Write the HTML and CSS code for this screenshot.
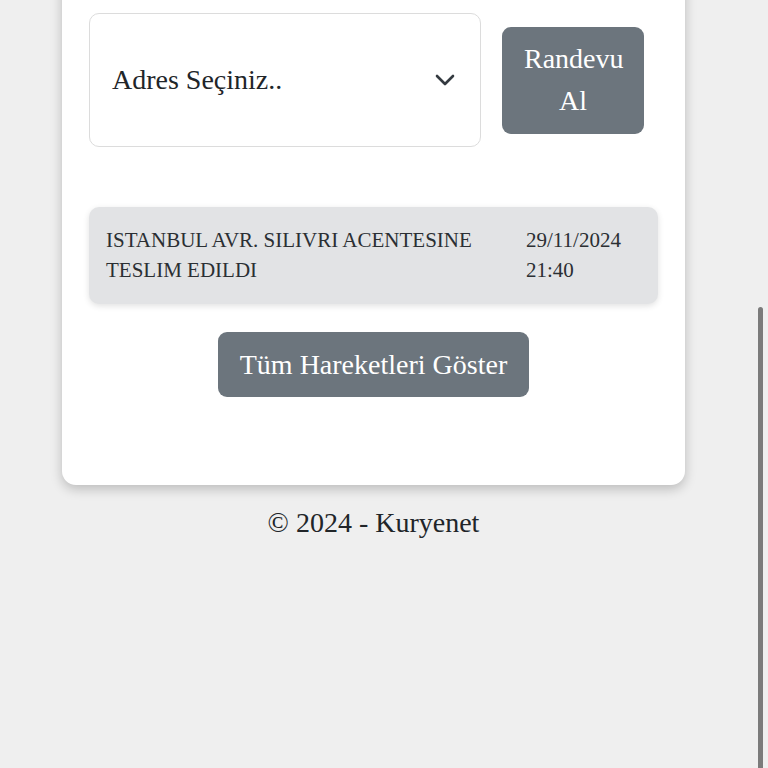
FILE: index.html
```html
<!DOCTYPE html>
<html lang="tr">
<head>
<meta charset="utf-8">
<title>Kuryenet</title>
<link rel="stylesheet" href="styles.css">
</head>
<body>
<div class="page">
  <div class="card">
    <div class="form-row">
      <div class="select">
        <span class="select-text">Adres Seçiniz..</span>
        <svg class="chevron" width="20" height="12" viewBox="0 0 20 12"><path d="M2 2 L10 10 L18 2" fill="none" stroke="#343a40" stroke-width="2.6" stroke-linecap="round" stroke-linejoin="round"/></svg>
      </div>
      <button class="btn btn-randevu">Randevu<br>Al</button>
    </div>
    <div class="move-row">
      <div class="move-desc">ISTANBUL AVR. SILIVRI ACENTESINE TESLIM EDILDI</div>
      <div class="move-date">29/11/2024<br>21:40</div>
    </div>
    <div class="actions">
      <button class="btn btn-all">Tüm Hareketleri Göster</button>
    </div>
  </div>
  <footer class="footer">© 2024 - Kuryenet</footer>
</div>
<div class="scrollbar"></div>
</body>
</html>
```

FILE: styles.css
```css
html, body {
  margin: 0;
  padding: 0;
  background: #efefef;
  font-family: "Liberation Serif", "Times New Roman", serif;
  color: #212529;
  overflow: hidden;
  height: 768px;
}

.page {
  width: 623px;
  padding: 0 62px;
}

.card {
  background: #fff;
  border-radius: 14px;
  margin-top: -30px;
  padding: 43px 27px 88px 27px;
  box-shadow: 0 4px 12px rgba(0, 0, 0, 0.22);
}

.form-row {
  display: grid;
  grid-template-columns: 392px 142px;
  column-gap: 21px;
  align-items: center;
}

.select {
  box-sizing: border-box;
  height: 134px;
  border: 1.5px solid #dcdcdc;
  border-radius: 10px;
  display: flex;
  align-items: center;
  justify-content: space-between;
  padding: 0 25px 0 22px;
  font-size: 28px;
  color: #212529;
}

.chevron {
  display: block;
}

.btn {
  font-family: "Liberation Serif", "Times New Roman", serif;
  font-size: 28px;
  line-height: 42px;
  color: #fff;
  background: #6c757d;
  border: none;
  border-radius: 9px;
  padding: 11.5px 22px;
  cursor: pointer;
}

.btn-randevu {
  width: 142px;
}

.move-row {
  margin-top: 60px;
  display: grid;
  grid-template-columns: 1fr 132px;
  background: #e2e3e5;
  border-radius: 10px;
  padding: 18px 0 19px 17px;
  font-size: 21px;
  line-height: 30px;
  color: #2b2f33;
  box-shadow: 0 2px 6px rgba(0, 0, 0, 0.12);
}

.move-desc {
  padding-right: 40px;
}

.actions {
  margin-top: 28px;
  display: flex;
  justify-content: center;
}

.btn-all {
  padding: 11.5px 21.5px;
}

.footer {
  text-align: center;
  font-size: 28px;
  line-height: 42px;
  margin-top: 17px;
  color: #212529;
}

.scrollbar {
  position: fixed;
  top: 307px;
  right: 5px;
  width: 5px;
  height: 480px;
  border-radius: 3px;
  background: #7b7b7b;
}
```
